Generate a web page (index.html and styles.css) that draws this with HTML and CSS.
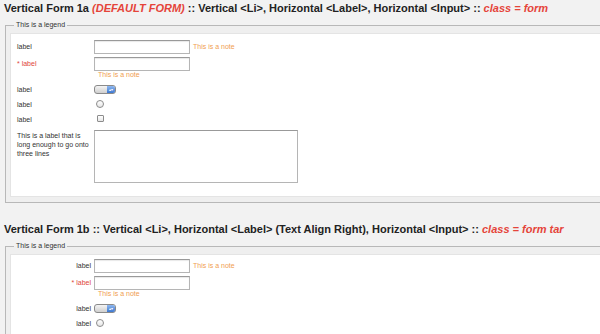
FILE: index.html
```html
<!DOCTYPE html>
<html>
<head>
  <title>Vertical Forms</title>
  <link rel="stylesheet" href="styles.css">
</head>
<body>

  <h2>Vertical Form 1a <em>(DEFAULT FORM)</em> :: Vertical &lt;Li&gt;, Horizontal &lt;Label&gt;, Horizontal &lt;Input&gt; :: <em>class = form</em></h2>
  <fieldset>
    <legend>This is a legend</legend>
    <ol class="form">
      <li class="row-text">
        <label>label</label>
        <div class="field"><input type="text"><span class="note">This is a note</span></div>
      </li>
      <li class="row-text row-req">
        <label class="req">* label</label>
        <div class="field stacked"><input type="text"><span class="note">This is a note</span></div>
      </li>
      <li class="row-small">
        <label>label</label>
        <div class="field"><span class="select"><span class="arrows">&#9652;&#9662;</span></span></div>
      </li>
      <li class="row-small">
        <label>label</label>
        <div class="field"><span class="radio"></span></div>
      </li>
      <li class="row-small">
        <label>label</label>
        <div class="field"><span class="check"></span></div>
      </li>
      <li class="row-area">
        <label>This is a label that is long enough to go onto three lines</label>
        <div class="field"><textarea></textarea></div>
      </li>
    </ol>
  </fieldset>

  <h2>Vertical Form 1b :: Vertical &lt;Li&gt;, Horizontal &lt;Label&gt; (Text Align Right), Horizontal &lt;Input&gt; :: <em>class = form tar</em></h2>
  <fieldset>
    <legend>This is a legend</legend>
    <ol class="form tar">
      <li class="row-text">
        <label>label</label>
        <div class="field"><input type="text"><span class="note">This is a note</span></div>
      </li>
      <li class="row-text row-req">
        <label class="req">* label</label>
        <div class="field stacked"><input type="text"><span class="note">This is a note</span></div>
      </li>
      <li class="row-small">
        <label>label</label>
        <div class="field"><span class="select"><span class="arrows">&#9652;&#9662;</span></span></div>
      </li>
      <li class="row-small">
        <label>label</label>
        <div class="field"><span class="radio"></span></div>
      </li>
    </ol>
  </fieldset>

</body>
</html>
```

FILE: styles.css
```css
html, body {
  overflow: hidden;
}
body {
  margin: 0;
  padding: 0 0 0 4px;
  background-color: #f2f2f2;
  font-family: "Liberation Sans", Arial, sans-serif;
  color: #222;
}
h2 {
  margin: 1px 0 0;
  font-size: 11px;
  line-height: 14px;
  font-weight: bold;
  white-space: nowrap;
}
h2 em {
  color: #e5443a;
}
fieldset {
  margin: 5px 0 0 1px;
  width: 1000px;
  padding: 3px 4px 5px;
  border: 1px solid #b8b8b8;
  border-right: none;
  background-color: #efefef;
}
fieldset + h2 {
  margin-top: 19px;
}
legend {
  margin-left: 4px;
  padding: 0 2px;
  font-size: 7px;
  line-height: 10px;
  color: #333;
}
.form {
  list-style: none;
  margin: 0;
  padding: 6px 6px 13px;
  background-color: #fff;
  border: 1px solid #e4e4e4;
}
.form.tar {
  padding-top: 4px;
}
.form li {
  display: grid;
  grid-template-columns: 77px auto;
  align-items: start;
  font-size: 7px;
  color: #333;
}
.form label {
  display: block;
  padding-right: 3px;
}
.tar label {
  text-align: right;
}
.row-text {
  margin-bottom: 3px;
}
.row-text label {
  line-height: 14px;
}
.row-req {
  margin-bottom: 6px;
}
.row-small {
  margin-bottom: 6px;
}
.row-small label {
  line-height: 9px;
}
.row-area {
  margin-top: 1px;
}
.row-area label {
  line-height: 9px;
  margin-top: 1px;
  padding-right: 3px;
}
.req {
  color: #e0463b;
}
.field {
  display: flex;
  align-items: center;
}
.field.stacked {
  flex-direction: column;
  align-items: flex-start;
}
input[type="text"] {
  width: 96px;
  height: 14px;
  box-sizing: border-box;
  margin: 0;
  padding: 0;
  border: 1px solid #b5b5b5;
  border-top-color: #999;
  box-shadow: inset 0 1px 1px #e8e8e8;
}
.note {
  margin-left: 3px;
  font-size: 7px;
  line-height: 8px;
  color: #f0a050;
}
.stacked .note {
  margin-left: 4px;
  margin-top: 0;
}
.select {
  position: relative;
  display: block;
  width: 22px;
  height: 9px;
  box-sizing: border-box;
  border: 1px solid #8a8a8a;
  border-radius: 3px;
  background: linear-gradient(#f4f4f4, #cfcfcf);
  overflow: hidden;
}
.arrows {
  position: absolute;
  right: 0;
  top: 0;
  bottom: 0;
  width: 8px;
  background: linear-gradient(#8fb8f0, #3d78d0);
  color: #fff;
  font-size: 4px;
  line-height: 3px;
  display: flex;
  flex-direction: column;
  align-items: center;
  justify-content: center;
}
.radio {
  display: block;
  margin-left: 2px;
  width: 8px;
  height: 8px;
  box-sizing: border-box;
  border: 1px solid #8c8c8c;
  border-radius: 50%;
  background: linear-gradient(#fff, #e6e6e6);
}
.check {
  display: block;
  margin-left: 3px;
  width: 7px;
  height: 7px;
  box-sizing: border-box;
  border: 1px solid #8c8c8c;
  border-radius: 1px;
  background: linear-gradient(#fff, #e6e6e6);
}
textarea {
  display: block;
  width: 204px;
  height: 53px;
  box-sizing: border-box;
  margin: 0;
  border: 1px solid #b5b5b5;
  border-top-color: #999;
  resize: none;
}
```
